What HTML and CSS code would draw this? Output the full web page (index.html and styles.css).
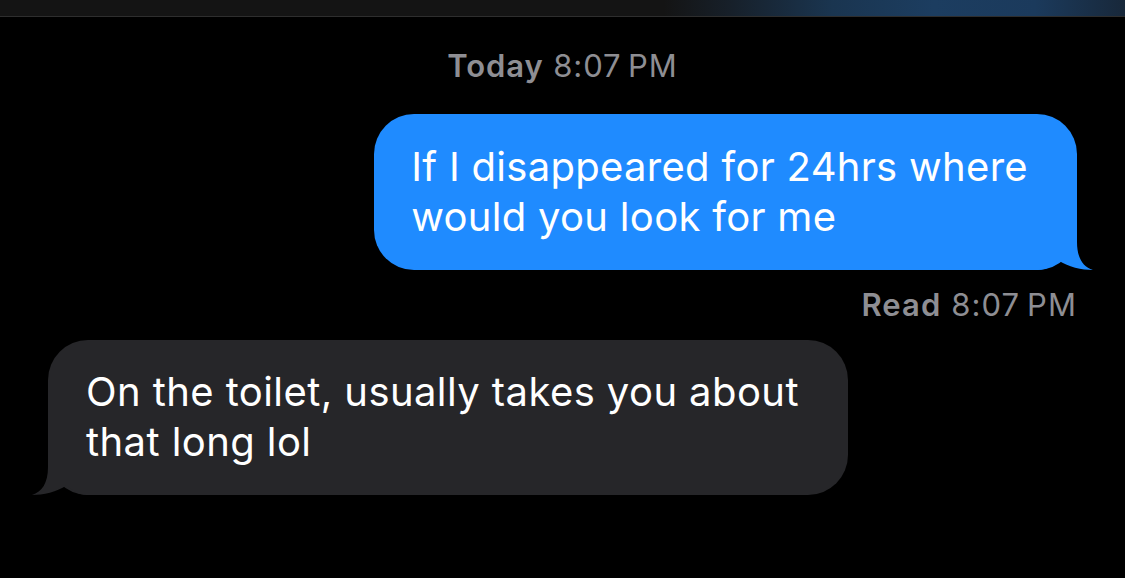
FILE: index.html
```html
<!DOCTYPE html>
<html>
<head>
<meta charset="utf-8">
<link rel="stylesheet" href="styles.css">
</head>
<body>
<div class="topbar"></div>
<main class="thread">
  <div class="stamp"><span class="strong">Today</span> 8:07&#8239;PM</div>
  <div class="row row-out">
    <div class="bubble bubble-out">
      If I disappeared for 24hrs where<br>would you look for me
      <svg class="tail tail-out" width="60" height="40" viewBox="0 0 60 40"><path d="M0 40 L0 0 L44 0 L44 12 C44 28 50 37 60 40 C49 40 35 37 25 30 C21 34 15 40 5 40 Z"/></svg>
    </div>
  </div>
  <div class="receipt"><span class="strong">Read</span> 8:07&#8239;PM</div>
  <div class="row row-in">
    <div class="bubble bubble-in">
      On the toilet, usually takes you about<br>that long lol
      <svg class="tail tail-in" width="60" height="40" viewBox="0 0 60 40"><path d="M0 40 L0 0 L44 0 L44 12 C44 28 50 37 60 40 C49 40 35 37 25 30 C21 34 15 40 5 40 Z"/></svg>
    </div>
  </div>
</main>
</body>
</html>
```

FILE: styles.css
```css
html, body {
  margin: 0;
  padding: 0;
  background: #000;
}
body {
  width: 1125px;
  height: 578px;
  overflow: hidden;
  font-family: Inter, "Liberation Sans", sans-serif;
}
.topbar {
  height: 16px;
  border-bottom: 1px solid #2e2e2e;
  background: linear-gradient(90deg, #141414 0%, #141414 59%, #17202a 65%, #1a3550 74%, #1c3d60 83%, #1b3a5c 92%, #18283a 100%);
}
.thread {
  display: flex;
  flex-direction: column;
  padding: 0 48px;
}
.stamp {
  margin-top: 31px;
  text-align: center;
  font-size: 31px;
  line-height: 36px;
  letter-spacing: 0.9px;
  color: #8e8e93;
}
.strong {
  font-weight: 600;
}
.row {
  display: flex;
}
.row-out {
  justify-content: flex-end;
  margin-top: 30px;
}
.row-in {
  justify-content: flex-start;
  margin-top: 17px;
}
.bubble {
  position: relative;
  font-size: 40px;
  line-height: 50px;
  letter-spacing: 0.3px;
  color: #fff;
  border-radius: 40px;
  padding: 28px 49px 28px 37px;
  white-space: nowrap;
}
.bubble-out {
  background: #1f8bff;
}
.bubble-in {
  background: #262629;
  letter-spacing: 0.42px;
  padding: 27px 49px 28px 38px;
}
.tail {
  position: absolute;
  bottom: 0;
}
.tail-out {
  right: -16px;
  fill: #1f8bff;
}
.tail-in {
  left: -16px;
  transform: scaleX(-1);
  fill: #262629;
}
.receipt {
  margin-top: 17px;
  text-align: right;
  font-size: 31px;
  line-height: 36px;
  letter-spacing: 1.1px;
  color: #8e8e93;
}
```
